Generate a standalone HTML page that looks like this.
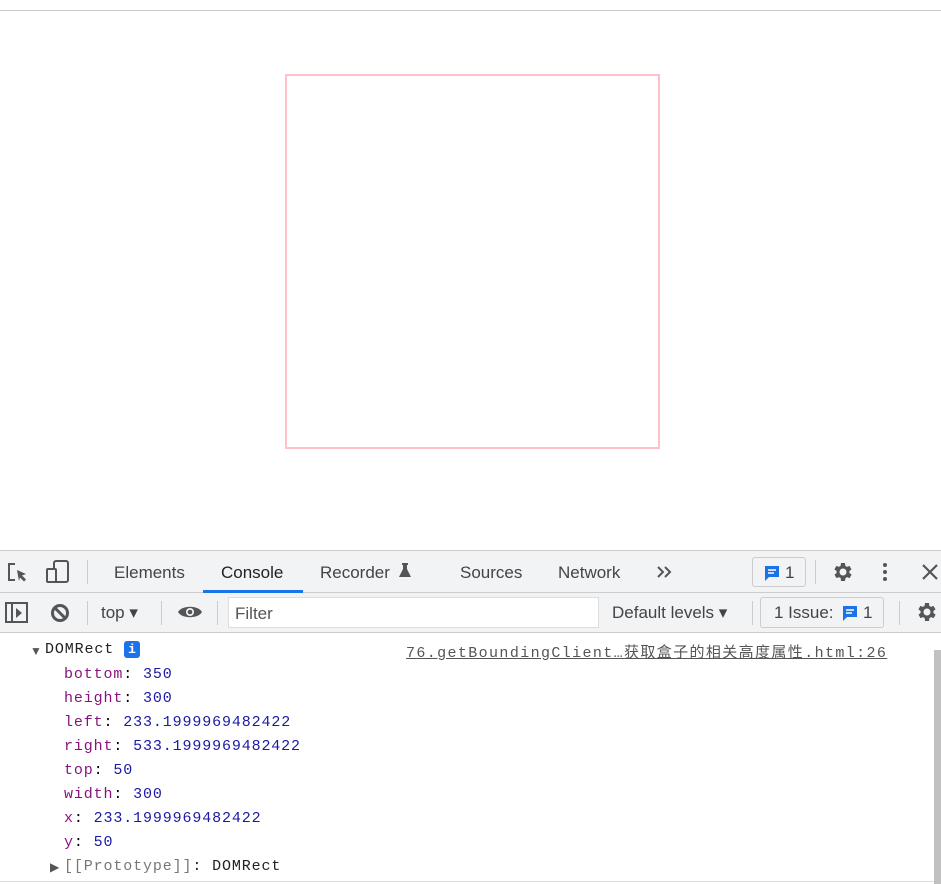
<!DOCTYPE html>
<html><head><meta charset="utf-8"><style>
*{margin:0;padding:0;box-sizing:border-box}
body{width:941px;height:884px;position:relative;background:#fff;overflow:hidden;font-family:"Liberation Sans",sans-serif}
.a{position:absolute;white-space:nowrap}
.ui{font-size:17px;color:#444}
.mono{font-family:"Liberation Mono","Noto Sans CJK SC",monospace;font-size:15px;letter-spacing:0.87px}
.k{color:#881280}.v{color:#1a1aa6}
.sep{position:absolute;width:1px;background:#ccc}
</style></head><body>
<div class="a" style="left:0;top:10px;width:941px;height:1px;background:#ccc"></div>
<div class="a" style="left:285px;top:74px;width:375px;height:375px;border:2px solid #ffc0cb"></div>

<div class="a" style="left:0;top:550px;width:941px;height:43px;background:#f1f3f4;border-top:1px solid #ccc;border-bottom:1px solid #ccc"></div>
<div class="a" style="left:0;top:593px;width:941px;height:40px;background:#f1f3f4;border-bottom:1px solid #ccc"></div>

<svg class="a" style="left:6px;top:561px" width="24" height="24" viewBox="0 0 24 24" fill="none" stroke="#555" stroke-width="2"><path d="M9 3H3v16h6"/><path d="M11 9l9 4-4 1.5 4 4-2 2-4-4L13 20z" fill="#555" stroke="none"/></svg>
<svg class="a" style="left:45px;top:559px" width="26" height="26" viewBox="0 0 26 26" fill="none" stroke="#555" stroke-width="2"><rect x="9" y="2" width="14" height="21" rx="2"/><rect x="2" y="10" width="9" height="13" rx="1" fill="#f1f3f4"/></svg>
<div class="sep" style="left:87px;top:560px;height:24px"></div>
<div class="a ui" style="left:114px;top:563px">Elements</div>
<div class="a ui" style="left:221px;top:563px;color:#222">Console</div>
<div class="a" style="left:203px;top:590px;width:100px;height:3px;background:#1a73e8"></div>
<div class="a ui" style="left:320px;top:563px">Recorder</div>
<svg class="a" style="left:397px;top:562px" width="16" height="16" viewBox="0 0 16 16"><path d="M5 1h6v2h-1v4l4 8H2l4-8V3H5z" fill="#555"/></svg>
<div class="a ui" style="left:460px;top:563px">Sources</div>
<div class="a ui" style="left:558px;top:563px">Network</div>
<svg class="a" style="left:656px;top:565px" width="16" height="14" viewBox="0 0 16 14" fill="none" stroke="#555" stroke-width="2"><path d="M2 2l5 5-5 5M9 2l5 5-5 5"/></svg>
<div class="a" style="left:752px;top:557px;width:54px;height:30px;border:1px solid #ccc;border-radius:3px;background:#f1f3f4"></div>
<svg class="a" style="left:763px;top:564px" width="18" height="18" viewBox="0 0 18 18"><path d="M2 2h14v11H6l-4 4z" fill="#1a73e8"/><path d="M5 6h8M5 9h6" stroke="#fff" stroke-width="1.5"/></svg>
<div class="a ui" style="left:785px;top:563px">1</div>
<div class="sep" style="left:815px;top:560px;height:24px"></div>
<svg class="a" style="left:831px;top:560px" width="24" height="24" viewBox="0 0 24 24"><path fill="#555" d="M19.4 13a7.5 7.5 0 000-2l2.1-1.6-2-3.5-2.5 1a7.6 7.6 0 00-1.7-1L15 3h-4l-.4 2.9a7.6 7.6 0 00-1.7 1l-2.5-1-2 3.5L6.6 11a7.5 7.5 0 000 2l-2.1 1.6 2 3.5 2.5-1a7.6 7.6 0 001.7 1L11 21h4l.4-2.9a7.6 7.6 0 001.7-1l2.5 1 2-3.5zM13 15.5a3.5 3.5 0 110-7 3.5 3.5 0 010 7z" transform="translate(-1 0)"/></svg>
<svg class="a" style="left:880px;top:561px" width="10" height="22"><circle cx="5" cy="4" r="2" fill="#555"/><circle cx="5" cy="11" r="2" fill="#555"/><circle cx="5" cy="18" r="2" fill="#555"/></svg>
<svg class="a" style="left:921px;top:563px" width="18" height="18"><path d="M2 2l14 14M16 2L2 16" stroke="#555" stroke-width="2.2"/></svg>

<svg class="a" style="left:5px;top:602px" width="24" height="22" viewBox="0 0 24 22" fill="none" stroke="#555" stroke-width="2"><rect x="1" y="1" width="21" height="19"/><path d="M7 1v19"/><path d="M11 6l6 5-6 5z" fill="#555" stroke="none"/></svg>
<svg class="a" style="left:50px;top:603px" width="20" height="20" viewBox="0 0 20 20" fill="none" stroke="#555" stroke-width="3"><circle cx="10" cy="10" r="7.5"/><path d="M5 5l10 10"/></svg>
<div class="sep" style="left:87px;top:601px;height:24px"></div>
<div class="a ui" style="left:101px;top:603px">top ▾</div>
<div class="sep" style="left:161px;top:601px;height:24px"></div>
<svg class="a" style="left:177px;top:603px" width="26" height="18" viewBox="0 0 26 18"><path d="M1 9C5 2 21 2 25 9C21 16 5 16 1 9z" fill="#555"/><circle cx="13" cy="9" r="4" fill="#f1f3f4"/><circle cx="13" cy="9" r="2.3" fill="#555"/></svg>
<div class="sep" style="left:217px;top:601px;height:24px"></div>
<div class="a" style="left:228px;top:597px;width:371px;height:31px;background:#fff;border:1px solid #ddd"></div>
<div class="a ui" style="left:235px;top:604px;color:#555">Filter</div>
<div class="a ui" style="left:612px;top:603px">Default levels ▾</div>
<div class="sep" style="left:752px;top:601px;height:24px"></div>
<div class="a" style="left:760px;top:597px;width:124px;height:31px;border:1px solid #ccc;border-radius:3px"></div>
<div class="a ui" style="left:774px;top:603px">1 Issue:</div>
<svg class="a" style="left:841px;top:604px" width="18" height="18" viewBox="0 0 18 18"><path d="M2 2h14v11H6l-4 4z" fill="#1a73e8"/><path d="M5 6h8M5 9h6" stroke="#fff" stroke-width="1.5"/></svg>
<div class="a ui" style="left:863px;top:603px">1</div>
<div class="sep" style="left:899px;top:601px;height:24px"></div>
<svg class="a" style="left:915px;top:600px" width="24" height="24" viewBox="0 0 24 24"><path fill="#555" d="M19.4 13a7.5 7.5 0 000-2l2.1-1.6-2-3.5-2.5 1a7.6 7.6 0 00-1.7-1L15 3h-4l-.4 2.9a7.6 7.6 0 00-1.7 1l-2.5-1-2 3.5L6.6 11a7.5 7.5 0 000 2l-2.1 1.6 2 3.5 2.5-1a7.6 7.6 0 001.7 1L11 21h4l.4-2.9a7.6 7.6 0 001.7-1l2.5 1 2-3.5zM13 15.5a3.5 3.5 0 110-7 3.5 3.5 0 010 7z" transform="translate(-1 0)"/></svg>

<div class="a" style="left:934px;top:650px;width:7px;height:234px;background:#c1c1c1"></div>
<div class="a" style="left:30px;top:644px;font-size:12px;color:#555">▼</div>
<div class="a mono" style="left:45px;top:641px;color:#222">DOMRect</div>
<div class="a" style="left:124px;top:641px;width:16px;height:17px;background:#1a73e8;border-radius:3px;color:#fff;font:bold 13px 'Liberation Mono',monospace;text-align:center;line-height:17px">i</div>
<div class="a mono" style="left:406px;top:641px;color:#555;text-decoration:underline;letter-spacing:1.38px">76.getBoundingClient…获取盒子的相关高度属性.html:26</div>
<div class="a mono" style="left:64px;top:666px"><span class="k">bottom</span>: <span class="v">350</span></div>
<div class="a mono" style="left:64px;top:690px"><span class="k">height</span>: <span class="v">300</span></div>
<div class="a mono" style="left:64px;top:714px"><span class="k">left</span>: <span class="v">233.1999969482422</span></div>
<div class="a mono" style="left:64px;top:738px"><span class="k">right</span>: <span class="v">533.1999969482422</span></div>
<div class="a mono" style="left:64px;top:762px"><span class="k">top</span>: <span class="v">50</span></div>
<div class="a mono" style="left:64px;top:786px"><span class="k">width</span>: <span class="v">300</span></div>
<div class="a mono" style="left:64px;top:810px"><span class="k">x</span>: <span class="v">233.1999969482422</span></div>
<div class="a mono" style="left:64px;top:834px"><span class="k">y</span>: <span class="v">50</span></div>
<div class="a" style="left:50px;top:860px;font-size:12px;color:#555">▶</div>
<div class="a mono" style="left:64px;top:858px;color:#222"><span style="color:#777">[[Prototype]]</span>: DOMRect</div>
<div class="a" style="left:0;top:881px;width:934px;height:1px;background:#ddd"></div>
</body></html>
